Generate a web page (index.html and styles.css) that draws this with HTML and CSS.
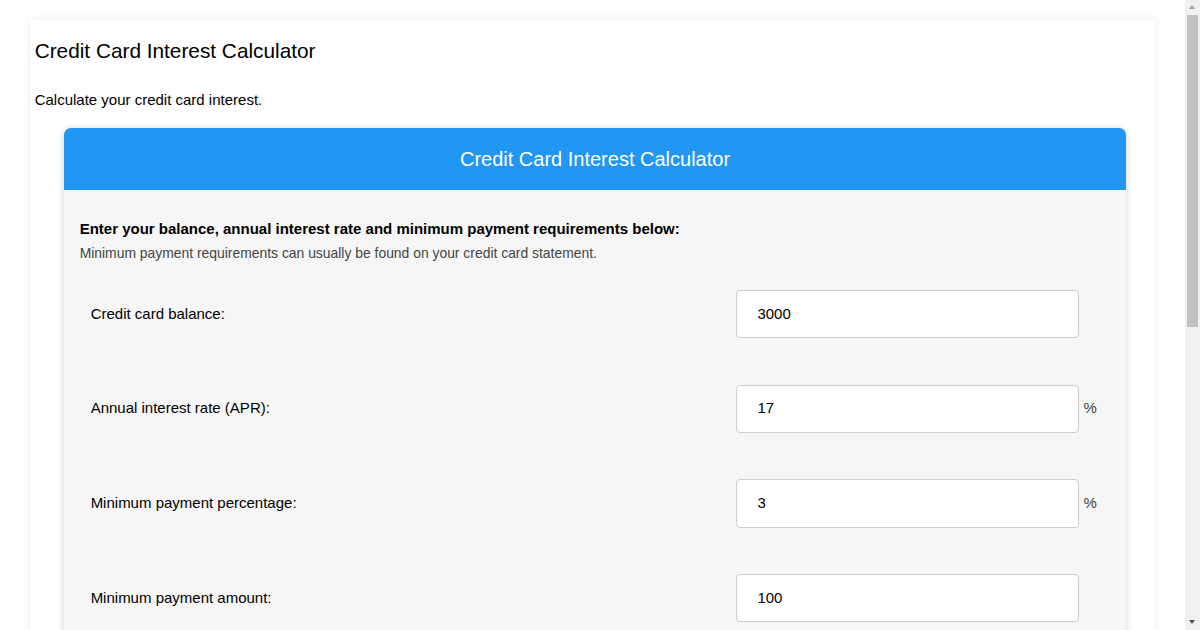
FILE: index.html
```html
<!DOCTYPE html>
<html>
<head>
<meta charset="utf-8">
<link rel="stylesheet" href="styles.css">
</head>
<body>
<div class="page">
  <h1 class="page-title">Credit Card Interest Calculator</h1>
  <p class="page-intro">Calculate your credit card interest.</p>
  <div class="calc">
    <div class="calc-head">Credit Card Interest Calculator</div>
    <div class="calc-body">
      <p class="lead">Enter your balance, annual interest rate and minimum payment requirements below:</p>
      <p class="note">Minimum payment requirements can usually be found on your credit card statement.</p>
      <div class="rows">
        <div class="row">
          <label class="row-label">Credit card balance:</label>
          <input class="row-input" type="text" value="3000">
          <span class="row-unit"></span>
        </div>
        <div class="row">
          <label class="row-label">Annual interest rate (APR):</label>
          <input class="row-input" type="text" value="17">
          <span class="row-unit">%</span>
        </div>
        <div class="row">
          <label class="row-label">Minimum payment percentage:</label>
          <input class="row-input" type="text" value="3">
          <span class="row-unit">%</span>
        </div>
        <div class="row">
          <label class="row-label">Minimum payment amount:</label>
          <input class="row-input" type="text" value="100">
          <span class="row-unit"></span>
        </div>
      </div>
      <div class="actions"><button class="btn">Calculate</button></div>
    </div>
  </div>
</div>
<div class="scrollbar" aria-hidden="true">
  <span class="sb-arrow sb-up"></span>
  <span class="sb-thumb"></span>
  <span class="sb-arrow sb-down"></span>
</div>
</body>
</html>
```

FILE: styles.css
```css
html, body {
  margin: 0;
  padding: 0;
  background: #ffffff;
}
html {
  scrollbar-width: none;
}
html::-webkit-scrollbar {
  display: none;
}
body {
  font-family: "Liberation Sans", Arial, sans-serif;
  color: #000;
  padding-top: 20px;
  padding-bottom: 40px;
  margin-right: 15px;
}
.page {
  width: 95%;
  margin: 0 auto;
  background: #fff;
  box-shadow: 0 0 8px rgba(0,0,0,0.09);
  padding: 19px 5px 40px 5px;
  box-sizing: border-box;
}
.page-title {
  font-size: 20.8px;
  font-weight: normal;
  line-height: 24px;
  margin: 0;
}
.page-intro {
  font-size: 15px;
  line-height: 17px;
  margin: 28px 0 0 0;
}
.calc {
  margin: 20px 24px 0 29px;
  border-radius: 7px;
  background: #f6f6f6;
  box-shadow: 0 1px 7px rgba(0,0,0,0.18);
  overflow: hidden;
}
.calc-head {
  background: #2196f3;
  color: #fff;
  height: 62px;
  display: flex;
  align-items: center;
  justify-content: center;
  font-size: 20px;
}
.calc-body {
  padding: 30px 16px 40px 16px;
}
.lead {
  font-size: 15px;
  font-weight: bold;
  line-height: 17px;
  margin: 0;
}
.note {
  font-size: 13.9px;
  line-height: 16px;
  color: #444;
  margin: 8px 0 0 0;
}
.rows {
  margin-top: 29px;
  display: flex;
  flex-direction: column;
  gap: 46.4px;
}
.row {
  display: flex;
  align-items: center;
  padding-left: 11px;
}
.row-label {
  flex: 1;
  font-size: 15px;
  margin-bottom: 2px;
}
.row-input {
  width: 343px;
  height: 48.3px;
  box-sizing: border-box;
  border: 1px solid #ccc;
  border-radius: 4px;
  background: #fff;
  padding: 0 20px 2px 20px;
  font-family: "Liberation Sans", Arial, sans-serif;
  font-size: 15px;
  color: #000;
  outline: none;
}
.row-unit {
  width: 26px;
  padding-left: 4px;
  padding-right: 1px;
  margin-bottom: 2px;
  font-size: 15px;
  color: #444;
}
.actions {
  margin-top: 40px;
  text-align: center;
}
.btn {
  background: #2196f3;
  color: #fff;
  border: 0;
  border-radius: 4px;
  padding: 12px 30px;
  font-size: 16px;
  font-family: "Liberation Sans", Arial, sans-serif;
}
.scrollbar {
  position: fixed;
  top: 0;
  right: 0;
  width: 15px;
  height: 100vh;
  background: #f1f1f1;
}
.sb-thumb {
  position: absolute;
  left: 2px;
  top: 15px;
  width: 11px;
  height: 312px;
  background: #c1c1c1;
}
.sb-arrow {
  position: absolute;
  left: 4px;
  width: 0;
  height: 0;
  border-left: 3.5px solid transparent;
  border-right: 3.5px solid transparent;
}
.sb-up {
  top: 5px;
  border-bottom: 4px solid #a3a3a3;
}
.sb-down {
  bottom: 6px;
  border-top: 4px solid #505050;
}
```
